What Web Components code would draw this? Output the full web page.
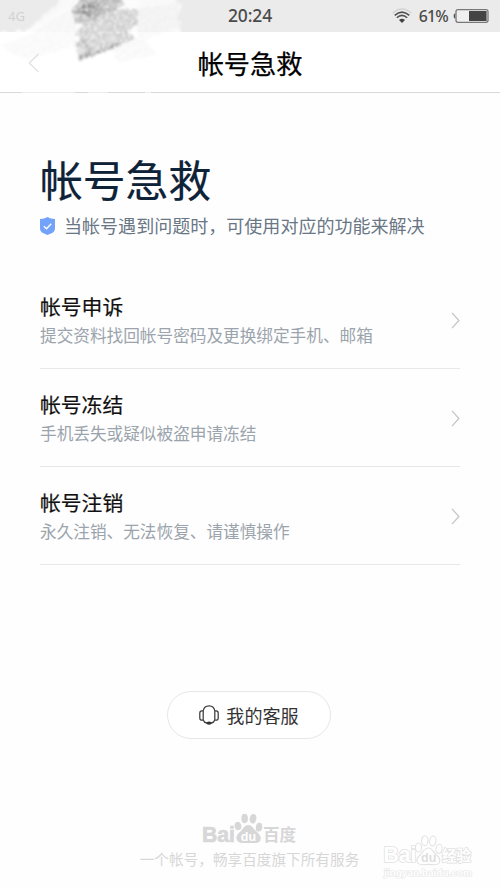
<!DOCTYPE html>
<html lang="zh-CN">
<head>
<meta charset="utf-8">
<title>帐号急救</title>
<style>
html,body{margin:0;padding:0}
body{width:500px;height:889px;overflow:hidden;background:#fefefe;font-family:"Noto Sans CJK SC",sans-serif}
</style>
</head>
<body>
<rescue-page></rescue-page>
<script>
const define=(name,css,html)=>customElements.define(name,class extends HTMLElement{
  connectedCallback(){
    if(this.shadowRoot)return;
    const t=document.createElement('template');
    t.innerHTML='<style>'+css+'</style>'+html;
    this.attachShadow({mode:'open'}).append(t.content.cloneNode(true));
  }
});

define('status-bar',`
:host{display:grid;grid-template-columns:1fr auto 1fr;align-items:center;height:32px;background:#ebebeb;color:#4a4a4a;font-family:"Noto Sans",sans-serif;font-weight:500;white-space:nowrap}
.net{padding-left:8px;font-size:13px;color:#c6c6c6;font-weight:400;line-height:32px}
.time{font-size:17.5px;line-height:30px;height:32px;letter-spacing:-.15px}
.right{display:flex;align-items:center;justify-content:flex-end;padding-right:11px;font-size:15.8px;line-height:30px;height:32px;letter-spacing:-.8px}
.wifi{margin-right:7px}.bat{margin-left:5px}
svg{display:block}`,`
<span class="net">4G</span><span class="time">20:24</span>
<span class="right"><svg class="wifi" width="20" height="16" viewBox="0 0 20 16" fill="none" stroke="#505050" stroke-width="1.5"><path d="M.7 5.2Q10-3.2 19.3 5.2" stroke="#d4d4d4"/><path d="M2.7 7.4Q10 .8 17.3 7.4"/><path d="M4.8 9.8Q10 5 15.2 9.8"/><path d="M7 12Q10 9.4 13 12L10 15Z" fill="#444" stroke="none"/></svg><span>61%</span><svg class="bat" width="36" height="16" viewBox="0 0 36 16"><path d="M2.2 5.2Q.6 5.2.6 8t1.6 2.8z" fill="#555"/><rect x="3" y="1.7" width="32" height="12.6" rx="2" fill="#efefef" stroke="#777" stroke-width="1.3"/><rect x="16" y="3" width="17.6" height="10" fill="#444"/></svg></span>`);

define('nav-header',`
:host{display:grid;grid-template-columns:40px 1fr 40px;align-items:center;height:60px;border-bottom:1px solid #d9d9d9;background:#fff}
svg{display:block;margin-left:28px;margin-top:2px}
h1{margin:0;text-align:center;font-size:26.2px;line-height:62px;height:60px;font-weight:400;-webkit-text-stroke:.25px #000;color:#000}`,`
<svg width="12" height="20" viewBox="0 0 12 20" fill="none" stroke="#e0e0e0" stroke-width="1.1"><path d="M10.5 1L1.2 10l9.3 9"/></svg><h1><slot></slot></h1>`);

define('scribble-mark',`
:host{position:absolute;left:0;top:0;width:200px;height:98px;pointer-events:none}svg{display:block}`,`
<svg width="200" height="98" viewBox="0 0 200 98">
<defs>
<filter id="edge" x="-10%" y="-10%" width="120%" height="120%" color-interpolation-filters="sRGB"><feTurbulence type="fractalNoise" baseFrequency=".12" numOctaves="3" seed="4"/><feDisplacementMap in="SourceGraphic" scale="9" xChannelSelector="R" yChannelSelector="G"/><feGaussianBlur stdDeviation="1.8"/></filter>
<filter id="grain" x="-10%" y="-10%" width="120%" height="120%" color-interpolation-filters="sRGB"><feTurbulence type="fractalNoise" baseFrequency=".35" numOctaves="2" seed="8" result="n"/><feColorMatrix in="n" values="0 0 0 0 0 0 0 0 0 0 0 0 0 0 0 0 0 0 1.7 -.2" result="a"/><feDisplacementMap in="SourceGraphic" in2="n" scale="4" xChannelSelector="R" yChannelSelector="G" result="s"/><feComposite in="s" in2="a" operator="in"/><feGaussianBlur stdDeviation=".8"/></filter>
</defs>
<g filter="url(#edge)"><path d="M66-5L175-5L181 8L178 20L181 34L20 34L29 29Z" fill="#fff" opacity=".68"/><path d="M24 32L64 9L76 4L140-2L136 28L145 40L25 42Z" fill="#fff" opacity=".45"/><path d="M0 32H50V43L10 46L0 40Z" fill="#fff"/><path d="M0 10L22 7L28 25L0 29Z" fill="#ebebeb" opacity=".35"/></g>
<path d="M22 92.5H75M88 92.5H108M145 92.5H151" stroke="#fff" stroke-width="1.6" opacity=".55"/>
<g filter="url(#grain)">
<path d="M82-3L121-3L125 5L112 10L137 9L138 24L127 31L136 38L110 49L79 60L78 56L87 51L76 45L81 38L75 34L83 25L74 22L79 15L71 12Z" fill="#aaa" opacity=".65"/>
<path d="M82 4L96 1L100 14L84 16L78 12Z" fill="#666" opacity=".75"/>
<path d="M72 10L82-3H121L117 9L95 20L75 23Z" fill="#888" opacity=".45"/>
<path d="M78 61L80 56L134 38L112 49Z" fill="#808080" opacity=".7"/>
<path d="M75 43L84 36L92 49L84 58L78 59Z" fill="#999" opacity=".4"/>
<path d="M30 34L75 5L76 45L29 60L10 52L0 46Z" fill="#bbb" opacity=".1"/>
<path d="M137 8L178 4L180 25L145 40L157 55L118 62L112 48L138 38Z" fill="#bbb" opacity=".12"/>
</g></svg>`);

define('page-intro',`
:host{display:block;padding-top:53px}
h2{margin:0;height:66px;line-height:65px;font-size:42.8px;font-weight:400;color:#0e2238;-webkit-text-stroke:.2px #0e2238}
.sub{display:flex;align-items:center;height:26px;line-height:26px;font-size:18.05px;color:#697685;white-space:nowrap}
svg{display:block;margin-right:9px;margin-top:1px}`,`
<h2><slot></slot></h2><div class="sub"><svg width="15" height="18" viewBox="0 0 15 18"><path d="M7.5 0Q10.8 2.1 15 2V11Q15 14.5 12.1 16L7.5 18L2.9 16Q0 14.5 0 11V2Q4.2 2.1 7.5 0Z" fill="#72a2fa"/><path d="M3.8 9.3L6.5 11.8L11.2 6.8" fill="none" stroke="#fff" stroke-width="1.3"/></svg><slot name="sub"></slot></div>`);

define('rescue-item',`
:host{display:flex;justify-content:space-between;box-sizing:border-box;border-bottom:1px solid #e8e8e8;height:98px;padding-top:19px}
h3{margin:0;height:32px;line-height:32px;font-size:20.8px;font-weight:400;color:#111;-webkit-text-stroke:.2px #111}
p{margin:0;height:27px;line-height:27px;font-size:16.65px;color:#9ba4ac;white-space:nowrap}
svg{display:block;margin-top:22px}`,`
<div><h3><slot></slot></h3><p><slot name="desc"></slot></p></div>
<svg width="9" height="17" viewBox="0 0 9 17" fill="none" stroke="#c6c6c6" stroke-width="1.3"><path d="M1 .9L7.9 8.5L1 16.1"/></svg>`);

define('service-button',`
:host{display:flex;align-items:center;justify-content:center;box-sizing:border-box;width:164px;height:48px;border:1.5px solid #e7e7e7;border-radius:24px;background:#fff;font-size:18.1px;line-height:46px;color:#333}
svg{display:block;margin-right:7px}`,`
<svg width="20" height="20" viewBox="0 0 20 20" fill="none" stroke="#3c3c3c" stroke-width="1.25"><path d="M4.2 6.3C4.5 2.8 6.8.8 10 .8s5.5 2 5.8 5.5M4.2 5.8V15.2H2.8Q.8 15.2.8 13V8Q.8 5.8 2.8 5.8ZM15.8 5.8V15.2H17.2Q19.2 15.2 19.2 13V8Q19.2 5.8 17.2 5.8ZM4.2 15Q5 17.6 8 18.1M15.8 15Q15 17.6 12 18.1"/><ellipse cx="10" cy="18.1" rx="2.7" ry="1.6" fill="#333" stroke="none"/></svg><slot></slot>`);

define('brand-footer',`
:host{display:flex;flex-direction:column;align-items:center;color:#d7d7d7}
svg{display:block}
p{margin:0 1px 0 0;height:27px;line-height:25px;font-size:14.65px;white-space:nowrap}`,`
<svg width="96" height="34" viewBox="0 0 96 34" fill="#d7d7d7">
<text x="0" y="30.2" stroke="#d7d7d7" stroke-width=".7" font-family="Liberation Sans,sans-serif" font-weight="700" font-size="21.5" textLength="33" lengthAdjust="spacingAndGlyphs">Bai</text>
<ellipse cx="36" cy="14" rx="3.3" ry="4.2" transform="rotate(-12 36 14)"/><ellipse cx="42.6" cy="6.5" rx="3.3" ry="4.8"/><ellipse cx="51" cy="6.8" rx="3.3" ry="4.8" transform="rotate(12 51 6.8)"/><ellipse cx="57" cy="15.2" rx="3.2" ry="4.4" transform="rotate(10 57 15.2)"/>
<path d="M46.3 13C50 13 51 16.5 54 19C58 22.5 60 25.5 58 29C56 32 51 30.9 46.5 30.9S38 32 35.5 29C33 26 34.5 22.5 38.5 19.5C41 17 42.5 13 46.3 13Z"/>
<text x="38.8" y="28.5" fill="#fff" font-family="Liberation Sans,sans-serif" font-weight="700" font-size="12.5">du</text>
<text x="61" y="29" font-family="Noto Sans CJK SC,sans-serif" font-weight="700" font-size="16.6">百度</text></svg>
<p><slot></slot></p>`);

define('corner-watermark',`
:host{position:absolute;left:380px;top:832px}svg{display:block}`,`
<svg width="100" height="50" viewBox="0 0 100 50" fill="#fff" stroke="#e2e2e2" stroke-width="1.1">
<text x="3.5" y="30" paint-order="stroke" font-family="Liberation Sans,sans-serif" font-weight="700" font-size="21.5" stroke-width="1.7" textLength="33" lengthAdjust="spacingAndGlyphs">Bai</text>
<ellipse cx="38.5" cy="15.5" rx="3" ry="4.5"/><ellipse cx="44.8" cy="8.7" rx="3.1" ry="5"/><ellipse cx="52.8" cy="9" rx="3.1" ry="5" transform="rotate(10 52.8 9)"/><ellipse cx="59" cy="16.8" rx="3" ry="4.6" transform="rotate(10 59 16.8)"/>
<path d="M48.5 16C52 16 53 19.5 56 22.5C60 26 61 28.5 59 31C57 34 53 32.4 48.5 32.4S40.5 34 37.8 31C35.8 28.5 37 25.5 40.5 22.5C43 19.5 44.5 16 48.5 16Z"/>
<text x="41" y="29.5" fill="#dedede" stroke="none" font-family="Liberation Sans,sans-serif" font-weight="700" font-size="12.5">du</text>
<text x="62" y="29" paint-order="stroke" font-family="Noto Sans CJK SC,sans-serif" font-weight="700" font-size="14.5" stroke-width="1.7">经验</text>
<text x="4" y="43.7" paint-order="stroke" font-family="Liberation Sans,sans-serif" font-weight="700" font-size="9" stroke-width="1.2" stroke="#e8e8e8" textLength="88" lengthAdjust="spacingAndGlyphs">jingyan.baidu.com</text></svg>`);

define('rescue-page',`
:host{display:flex;flex-direction:column;position:relative;width:500px;height:889px;overflow:hidden}
main{padding:0 40px}
.list{margin-top:33px}
service-button{margin:126px auto 0 167px}
brand-footer{margin-top:73px}`,`
<status-bar></status-bar><nav-header>帐号急救</nav-header>
<main><page-intro>帐号急救<span slot="sub">当帐号遇到问题时，可使用对应的功能来解决</span></page-intro>
<div class="list">
<rescue-item>帐号申诉<span slot="desc">提交资料找回帐号密码及更换绑定手机、邮箱</span></rescue-item>
<rescue-item>帐号冻结<span slot="desc">手机丢失或疑似被盗申请冻结</span></rescue-item>
<rescue-item>帐号注销<span slot="desc">永久注销、无法恢复、请谨慎操作</span></rescue-item></div></main>
<service-button>我的客服</service-button>
<brand-footer>一个帐号，畅享百度旗下所有服务</brand-footer>
<scribble-mark></scribble-mark><corner-watermark></corner-watermark>`);
</script>
</body>
</html>
